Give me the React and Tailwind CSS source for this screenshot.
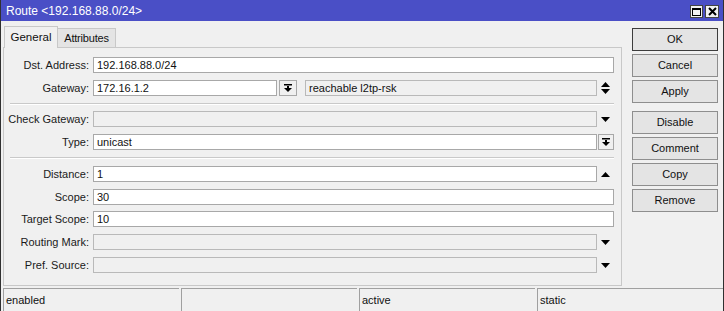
import React from 'react';

const font = { fontFamily: '"Liberation Sans", Arial, sans-serif' };

const DownArrow = () => (
  <svg width="9" height="5" viewBox="0 0 9 5">
    <path d="M0 0h9L4.5 5z" fill="#000" />
  </svg>
);

const UpArrow = () => (
  <svg width="9" height="5" viewBox="0 0 9 5">
    <path d="M0 5h9L4.5 0z" fill="#000" />
  </svg>
);

const UpDown = () => (
  <svg width="9" height="12" viewBox="0 0 9 12">
    <path d="M0 5h9L4.5 0z" fill="#000" />
    <path d="M0 7h9L4.5 12z" fill="#000" />
  </svg>
);

const DropIcon = () => (
  <svg width="8" height="8" viewBox="0 0 8 8">
    <rect x="0" y="0" width="8" height="1.5" fill="#000" />
    <rect x="3" y="2" width="2" height="2" fill="#000" />
    <path d="M0 4h8L4 8z" fill="#000" />
  </svg>
);

const Label = ({ children }) => (
  <div className="w-[86px] shrink-0 text-right pr-[1px] text-[11px] text-[#1a1a1a] leading-[16px]">
    {children}
  </div>
);

const Field = ({ value, disabled, className = '' }) => (
  <div
    className={`h-[16px] border px-[3px] text-[11px] leading-[14px] text-[#111] ${
      disabled ? 'bg-[#f0f0f0] border-[#b9b9b9]' : 'bg-white border-[#a8a8a8]'
    } ${className}`}
  >
    {value}
  </div>
);

const Row = ({ label, children, className = '' }) => (
  <div className={`flex items-center h-[16px] ${className}`}>
    <Label>{label}</Label>
    <div className="ml-[3px] flex flex-1 items-center">{children}</div>
  </div>
);

const ArrowSlot = ({ children }) => (
  <div className="w-[17px] h-[16px] flex items-center justify-center">{children}</div>
);

const Separator = ({ className = '' }) => (
  <div className={`ml-[6px] h-[2px] border-t border-[#c9c9c9] border-b border-b-white ${className}`} />
);

const Btn = ({ children, primary }) => (
  <div
    className={`h-[23px] flex items-center justify-center text-[11px] text-[#111] bg-[#e4e4e4] border ${
      primary ? 'border-[#3c3c3c]' : 'border-[#8e8e8e]'
    }`}
  >
    {children}
  </div>
);

export default function App() {
  return (
    <div
      className="w-[724px] h-[311px] bg-[#f0f0f0] border-x border-[#303030] flex flex-col overflow-hidden"
      style={font}
    >
      {/* title bar */}
      <div className="h-[21px] shrink-0 bg-[#4a4fc6] flex items-center pl-[5px] pr-[4px]">
        <span className="text-white text-[12px] leading-none">Route &lt;192.168.88.0/24&gt;</span>
        <div className="ml-auto flex gap-[2px] mt-[2px]">
          <div className="w-[13px] h-[13px] bg-[#f2f2f2] border border-[#444] flex items-center justify-center">
            <div className="w-[9px] h-[8px] border border-black border-t-2" />
          </div>
          <div className="w-[14px] h-[13px] bg-[#f2f2f2] border border-[#444] flex items-center justify-center">
            <svg width="9" height="9" viewBox="0 0 9 9">
              <path d="M1 1L8 8M8 1L1 8" stroke="#000" strokeWidth="2" />
            </svg>
          </div>
        </div>
      </div>

      <div className="flex flex-1">
        {/* left */}
        <div className="ml-[2px] w-[619px] flex flex-col">
          <div className="h-[26px] flex items-end pl-[1px]">
            <div className="h-[22px] w-[54px] bg-[#f0f0f0] border border-b-0 border-[#c8c8c8] flex items-center justify-center text-[11.5px] text-[#111] relative z-10 -mb-[1px]">
              General
            </div>
            <div className="h-[19px] w-[58px] bg-[#e4e4e4] border border-l-0 border-b-0 border-[#c8c8c8] flex items-center justify-center text-[11px] text-[#111] tracking-[-0.2px]">
              Attributes
            </div>
          </div>
          <div className="flex-1 border border-[#c8c8c8] pt-[9px] pr-[7px] mb-[1px]">
            <Row label="Dst. Address:">
              <Field value="192.168.88.0/24" className="flex-1" />
            </Row>
            <Row label="Gateway:" className="mt-[7px]">
              <Field value="172.16.1.2" className="w-[184px]" />
              <div className="ml-[2px] w-[18px] h-[16px] border border-[#a8a8a8] bg-[#f0f0f0] flex items-center justify-center">
                <DropIcon />
              </div>
              <Field value="reachable l2tp-rsk" disabled className="ml-[8px] flex-1" />
              <ArrowSlot>
                <UpDown />
              </ArrowSlot>
            </Row>
            <Separator className="mt-[7px]" />
            <Row label="Check Gateway:" className="mt-[6px]">
              <Field value="" disabled className="flex-1" />
              <ArrowSlot>
                <DownArrow />
              </ArrowSlot>
            </Row>
            <Row label="Type:" className="mt-[7px]">
              <Field value="unicast" className="flex-1" />
              <div className="ml-[1px] w-[16px] h-[16px] border border-[#a8a8a8] bg-[#f0f0f0] flex items-center justify-center">
                <DropIcon />
              </div>
            </Row>
            <Separator className="mt-[7px]" />
            <Row label="Distance:" className="mt-[7px]">
              <Field value="1" className="flex-1" />
              <ArrowSlot>
                <UpArrow />
              </ArrowSlot>
            </Row>
            <Row label="Scope:" className="mt-[7px]">
              <Field value="30" className="flex-1" />
            </Row>
            <Row label="Target Scope:" className="mt-[6px]">
              <Field value="10" className="flex-1" />
            </Row>
            <Row label="Routing Mark:" className="mt-[7px]">
              <Field value="" disabled className="flex-1" />
              <ArrowSlot>
                <DownArrow />
              </ArrowSlot>
            </Row>
            <Row label="Pref. Source:" className="mt-[7px]">
              <Field value="" disabled className="flex-1" />
              <ArrowSlot>
                <DownArrow />
              </ArrowSlot>
            </Row>
          </div>
        </div>

        {/* right buttons */}
        <div className="ml-[10px] w-[86px] pt-[7px] flex flex-col">
          <Btn primary>OK</Btn>
          <div className="mt-[3px]"><Btn>Cancel</Btn></div>
          <div className="mt-[3px]"><Btn>Apply</Btn></div>
          <div className="mt-[8px]"><Btn>Disable</Btn></div>
          <div className="mt-[3px]"><Btn>Comment</Btn></div>
          <div className="mt-[3px]"><Btn>Copy</Btn></div>
          <div className="mt-[3px]"><Btn>Remove</Btn></div>
        </div>
      </div>

      {/* status bar */}
      <div className="h-[24px] shrink-0 flex gap-[2px] pl-[2px] pt-[1px]">
        {['enabled', '', 'active', 'static'].map((t, i) => (
          <div
            key={i}
            className={`h-full border-t border-l border-[#a0a0a0] pl-[2px] pt-[3px] text-[11px] text-[#111] ${
              i === 3 ? 'flex-1' : 'w-[176px]'
            }`}
          >
            {t}
          </div>
        ))}
      </div>
    </div>
  );
}
